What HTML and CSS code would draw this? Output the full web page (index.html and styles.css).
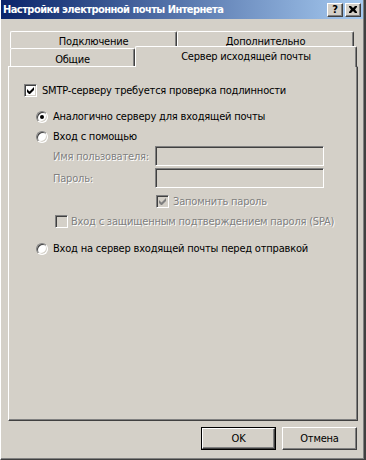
FILE: index.html
```html
<!DOCTYPE html>
<html>
<head>
    <title>Настройки электронной почты Интернета</title>
    <link rel="stylesheet" href="styles.css">
</head>
<body>
    <div class="window">
        <div class="titlebar">
            <span class="title">Настройки электронной почты Интернета</span>
            <div class="caption-buttons">
                <span class="cbtn help">?</span>
                <span class="cbtn close">
                    <svg width="8" height="7" viewBox="0 0 8 7"><path d="M0 0h2l2 2 2-2h2v1L6 3.5 8 6v1H6L4 5 2 7H0V6l2-2.5L0 1z" fill="#000"/></svg>
                </span>
            </div>
        </div>

        <div class="content">
            <div class="tabs">
                <div class="tab-row back">
                    <div class="tab tab-conn">Подключение</div>
                    <div class="tab tab-extra">Дополнительно</div>
                </div>
                <div class="tab-row front">
                    <div class="tab tab-general">Общие</div>
                    <div class="tab tab-outgoing selected">Сервер исходящей почты</div>
                </div>
            </div>

            <div class="panel">
                <div class="row row-smtp">
                    <span class="check checked">
                        <svg width="7" height="7" viewBox="0 0 7 7"><path d="M0 2v3l2 2h1l4-4V0L2.5 4.5z" fill="#000"/></svg>
                    </span>
                    <span class="label">SMTP-серверу требуется проверка подлинности</span>
                </div>
                <div class="row row-radio first">
                    <span class="radio on"><span class="dot"></span></span>
                    <span class="label">Аналогично серверу для входящей почты</span>
                </div>
                <div class="row row-radio second">
                    <span class="radio"></span>
                    <span class="label">Вход с помощью</span>
                </div>
                <div class="row row-field user">
                    <span class="label disabled field-label">Имя пользователя:</span>
                    <span class="textbox"></span>
                </div>
                <div class="row row-field pass">
                    <span class="label disabled field-label">Пароль:</span>
                    <span class="textbox"></span>
                </div>
                <div class="row row-remember">
                    <span class="check off checked">
                        <svg width="7" height="7" viewBox="0 0 7 7"><path d="M0 2v3l2 2h1l4-4V0L2.5 4.5z" fill="#808080"/></svg>
                    </span>
                    <span class="label disabled">Запомнить пароль</span>
                </div>
                <div class="row row-spa">
                    <span class="check off"></span>
                    <span class="label disabled">Вход с защищенным подтверждением пароля (SPA)</span>
                </div>
                <div class="row row-radio third">
                    <span class="radio"></span>
                    <span class="label">Вход на сервер входящей почты перед отправкой</span>
                </div>
            </div>

            <div class="buttons">
                <span class="button default"><span class="face">OK</span></span>
                <span class="button"><span class="face">Отмена</span></span>
            </div>
        </div>
    </div>
</body>
</html>
```

FILE: styles.css
```css
body {
    margin: 0;
    background-color: #d4d0c8;
    font-family: "DejaVu Sans Condensed", "Liberation Sans", sans-serif;
    font-size: 11px;
    letter-spacing: -0.2px;
    color: #000;
}
.window {
    width: 366px;
    height: 460px;
    box-sizing: border-box;
    background-color: #d4d0c8;
    border-left: 1px solid #ffffff;
    border-right: 2px solid #404040;
    border-bottom: 1px solid #404040;
    box-shadow: inset -1px -1px 0 #808080;
}
.titlebar {
    height: 19px;
    margin-right: 1px;
    display: flex;
    align-items: center;
    justify-content: space-between;
    background: linear-gradient(to right, #0a246a, #a6caf0);
    padding-left: 2px;
}
.title {
    color: #fff;
    font-weight: bold;
    font-size: 11px;
    letter-spacing: -0.55px;
}
.caption-buttons {
    display: flex;
    gap: 2px;
    margin-right: 2px;
}
.cbtn {
    width: 16px;
    height: 14px;
    box-sizing: border-box;
    background-color: #d4d0c8;
    border-top: 1px solid #fff;
    border-left: 1px solid #fff;
    border-right: 1px solid #404040;
    border-bottom: 1px solid #404040;
    box-shadow: inset -1px -1px 0 #808080;
    display: flex;
    align-items: center;
    justify-content: center;
}
.cbtn.help {
    font-weight: bold;
    font-size: 11px;
    line-height: 12px;
}
.content {
    padding: 12px 6px 0 7px;
}
.tabs {
    margin-left: 2px;
}
.tab-row {
    display: flex;
}
.tab-row.back {
    height: 17px;
}
.tab-row.front {
    height: 18px;
    align-items: flex-end;
}
.tab {
    box-sizing: border-box;
    height: 100%;
    background-color: #d4d0c8;
    border-top: 1px solid #fff;
    border-left: 1px solid #fff;
    border-right: 1px solid #404040;
    border-radius: 2px 2px 0 0;
    box-shadow: inset -1px 0 0 #808080;
    display: flex;
    justify-content: center;
    padding-top: 3px;
}
.tab-conn {
    width: 167px;
}
.tab-extra {
    width: 177px;
}
.tab-general {
    width: 125px;
    padding-top: 4px;
}
.tab-outgoing {
    width: 222px;
}
.tab.selected {
    position: relative;
    z-index: 1;
    height: 21px;
    margin-bottom: -1px;
    padding-top: 3px;
}
.panel {
    width: 350px;
    height: 355px;
    box-sizing: border-box;
    border-top: 1px solid #fff;
    border-left: 1px solid #fff;
    border-right: 1px solid #404040;
    border-bottom: 1px solid #404040;
    box-shadow: inset -1px -1px 0 #808080;
    padding: 17px 0 0 15px;
}
.row {
    display: flex;
    align-items: center;
    height: 13px;
}
.label {
    white-space: nowrap;
}
.disabled {
    color: #808080;
    text-shadow: 1px 1px 0 #fff;
}
.check {
    width: 13px;
    height: 13px;
    box-sizing: border-box;
    flex: none;
    background-color: #fff;
    border: 1px solid;
    border-color: #808080 #fff #fff #808080;
    box-shadow: inset 1px 1px 0 #404040, inset -1px -1px 0 #d4d0c8;
    display: flex;
    align-items: center;
    justify-content: center;
    margin-right: 5px;
}
.check.off {
    background-color: #d4d0c8;
}
.radio {
    width: 12px;
    height: 12px;
    box-sizing: border-box;
    flex: none;
    border-radius: 50%;
    background-color: #fff;
    border: 1px solid;
    border-color: #808080 #fff #fff #808080;
    box-shadow: inset 1px 1px 0 #404040, inset -1px -1px 0 #d4d0c8;
    display: flex;
    align-items: center;
    justify-content: center;
    margin-right: 5px;
    margin-left: 12px;
}
.dot {
    width: 4px;
    height: 4px;
    border-radius: 50%;
    background-color: #000;
}
.row-radio.first {
    margin-top: 13px;
}
.row-radio.second {
    margin-top: 7px;
}
.row-radio.third {
    margin-top: 14px;
}
.row-field {
    height: 20px;
}
.row-field.user {
    margin-top: 3px;
}
.row-field.pass {
    margin-top: 2px;
}
.field-label {
    width: 102px;
    margin-left: 29px;
}
.textbox {
    width: 169px;
    height: 20px;
    box-sizing: border-box;
    border: 1px solid;
    border-color: #808080 #fff #fff #808080;
    box-shadow: inset 1px 1px 0 #404040, inset -1px -1px 0 #d4d0c8;
}
.row-remember {
    margin-top: 7px;
    padding-left: 132px;
}
.row-remember .check {
    margin-right: 4px;
}
.row-spa {
    margin-top: 7px;
    padding-left: 31px;
}
.row-spa .check {
    margin-right: 3px;
}
.buttons {
    display: flex;
    justify-content: flex-end;
    gap: 6px;
    margin-top: 6px;
    padding-right: 1px;
}
.button {
    width: 75px;
    height: 23px;
    box-sizing: border-box;
    border-top: 1px solid #fff;
    border-left: 1px solid #fff;
    border-right: 1px solid #404040;
    border-bottom: 1px solid #404040;
    box-shadow: inset -1px -1px 0 #808080;
    display: flex;
}
.button .face {
    flex: 1;
    display: flex;
    align-items: center;
    justify-content: center;
}
.button.default {
    border: 1px solid #000;
    box-shadow: none;
}
.button.default .face {
    border-top: 1px solid #fff;
    border-left: 1px solid #fff;
    border-right: 1px solid #404040;
    border-bottom: 1px solid #404040;
    box-shadow: inset -1px -1px 0 #808080;
}
```
